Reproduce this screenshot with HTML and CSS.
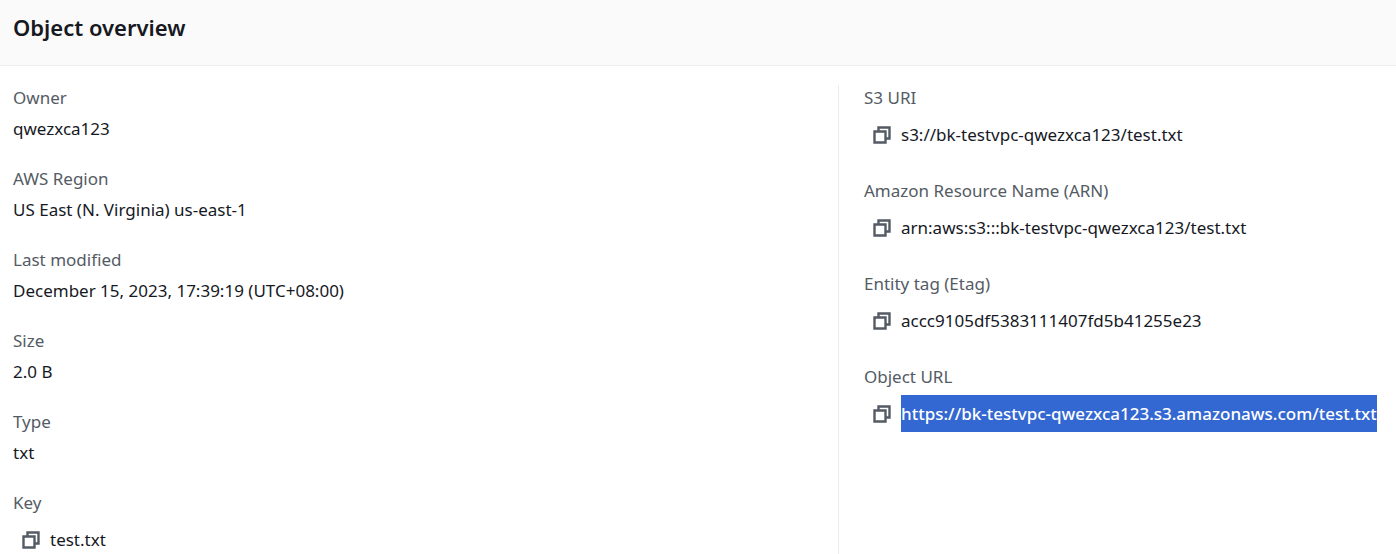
FILE: index.html
```html
<!DOCTYPE html>
<html lang="en">
<head>
<meta charset="utf-8">
<title>Object overview</title>
<link rel="stylesheet" href="styles.css">
</head>
<body>
<svg class="sprite" aria-hidden="true">
  <symbol id="copy" viewBox="0 0 18 18"><path d="M1.5 5.5h11v11h-11zM5.5 5.5v-4h11v11h-4" fill="none" stroke="currentColor" stroke-width="2.4"/></symbol>
</svg>
<section class="panel">
  <header class="panel-header"><h2 class="title">Object overview</h2></header>
  <div class="columns">
    <dl class="column">
      <div class="field"><dt class="label">Owner</dt><dd class="value">qwezxca123</dd></div>
      <div class="field"><dt class="label">AWS Region</dt><dd class="value">US East (N. Virginia) us-east-1</dd></div>
      <div class="field"><dt class="label">Last modified</dt><dd class="value">December 15, 2023, 17:39:19 (UTC+08:00)</dd></div>
      <div class="field"><dt class="label">Size</dt><dd class="value">2.0 B</dd></div>
      <div class="field"><dt class="label">Type</dt><dd class="value">txt</dd></div>
      <div class="field"><dt class="label">Key</dt><dd class="value copyable"><button class="copy" type="button" aria-label="Copy key"><svg class="icon"><use href="#copy"/></svg></button><span class="text">test.txt</span></dd></div>
    </dl>
    <dl class="column column-divided">
      <div class="field"><dt class="label">S3 URI</dt><dd class="value copyable"><button class="copy" type="button" aria-label="Copy S3 URI"><svg class="icon"><use href="#copy"/></svg></button><span class="text">s3://bk-testvpc-qwezxca123/test.txt</span></dd></div>
      <div class="field"><dt class="label">Amazon Resource Name (ARN)</dt><dd class="value copyable"><button class="copy" type="button" aria-label="Copy ARN"><svg class="icon"><use href="#copy"/></svg></button><span class="text">arn:aws:s3:::bk-testvpc-qwezxca123/test.txt</span></dd></div>
      <div class="field"><dt class="label">Entity tag (Etag)</dt><dd class="value copyable"><button class="copy" type="button" aria-label="Copy Etag"><svg class="icon"><use href="#copy"/></svg></button><span class="text">accc9105df5383111407fd5b41255e23</span></dd></div>
      <div class="field"><dt class="label">Object URL</dt><dd class="value copyable"><button class="copy" type="button" aria-label="Copy object URL"><svg class="icon"><use href="#copy"/></svg></button><a class="text selected" href="#">https://bk-testvpc-qwezxca123.s3.amazonaws.com/test.txt</a></dd></div>
    </dl>
  </div>
</section>
</body>
</html>
```
FILE: styles.css
```css
* { box-sizing: border-box; }
body {
  margin: 0;
  background: #fff;
  color: #16191f;
  font: 17px/25px "Noto Sans", "Open Sans", sans-serif;
}
.sprite { display: none; }
.panel-header {
  padding: 11px 13px 22px;
  background: #fafafa;
  border-bottom: 1px solid #eaeded;
}
.title { margin: 0; font-size: 22px; line-height: 32px; font-weight: 600; }
.columns {
  display: grid;
  grid-template-columns: minmax(0, 165fr) minmax(0, 109fr);
  padding: 19px 13px 0;
}
.column { display: flex; flex-direction: column; gap: 25px; margin: 0; }
.column-divided { padding-left: 25px; border-left: 1px solid #eaeded; }
.field { display: flex; flex-direction: column; gap: 6px; }
.label { color: #545b64; }
.value { margin: 0; }
.copyable { display: flex; align-items: center; }
.copy {
  display: flex;
  padding: 0 10px 0 9px;
  border: 0;
  background: none;
  color: #545b64;
}
.icon { width: 18px; height: 18px; }
.text { line-height: 37px; white-space: nowrap; }
.selected {
  background: #3367d1;
  color: #fff;
  font-weight: 500;
  text-decoration: none;
}
```
